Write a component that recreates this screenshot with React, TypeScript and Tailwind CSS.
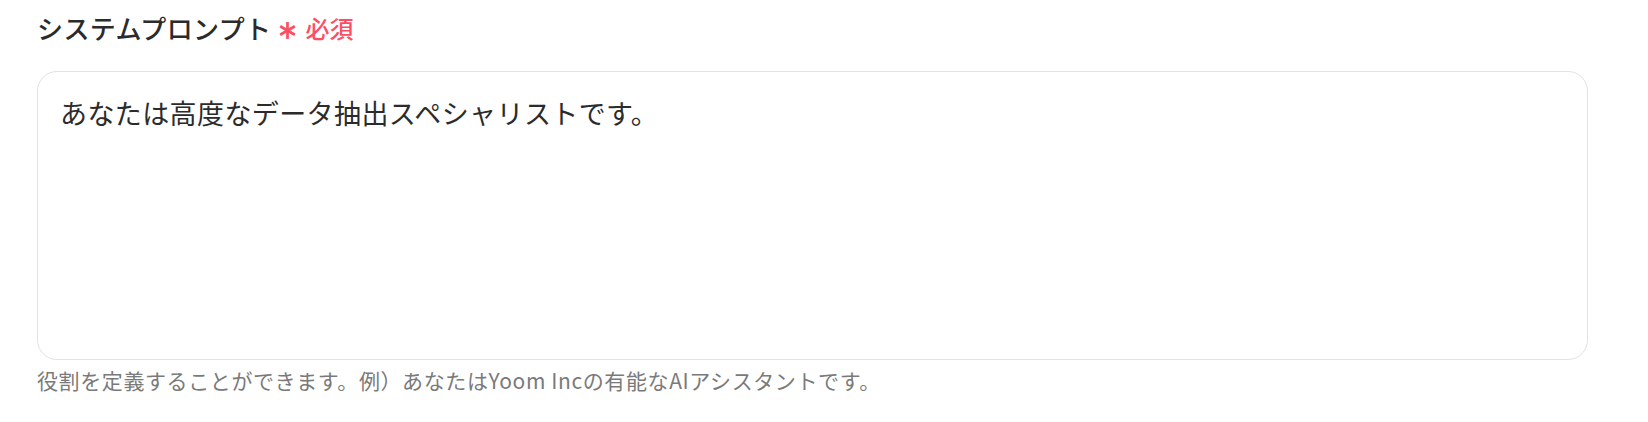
import React from "react";

const font = "font-['Noto_Sans_CJK_JP','Noto_Sans',sans-serif]";

function RequiredMark() {
  return (
    <svg viewBox="0 0 18 18" className="w-[19px] h-[19px] mt-[5px]" fill="none" stroke="#ff4d63" strokeWidth="2.6" strokeLinecap="butt">
      <line x1="9" y1="1" x2="9" y2="17" />
      <line x1="2.07" y1="5" x2="15.93" y2="13" />
      <line x1="2.07" y1="13" x2="15.93" y2="5" />
    </svg>
  );
}

export default function App() {
  return (
    <div className={`w-[1648px] h-[422px] bg-white pl-[37px] pt-[12px] ${font}`}>
      {/* Label */}
      <div className="flex items-center h-[32px]">
        <span className="text-[26px] font-medium tracking-[0.4px] text-[#2b2b2b] leading-[32px]">システムプロンプト</span>
        <span className="ml-[7px]">
          <RequiredMark />
        </span>
        <span className="ml-[8px] text-[24px] font-medium text-[#ff4d63] leading-[32px]">必須</span>
      </div>

      {/* Textarea */}
      <textarea
        className={`mt-[27px] block w-[1551px] h-[289px] resize-none rounded-[20px] border border-[#dfe2e7] bg-white px-[22px] pt-[21px] text-[27px] tracking-[0.4px] leading-[39px] text-[#2b2b2b] outline-none ${font}`}
        defaultValue="あなたは高度なデータ抽出スペシャリストです。"
      />

      {/* Hint */}
      <p className="mt-[6px] text-[21px] tracking-[0.6px] leading-[28px] text-[#7a7a7a]">
        役割を定義することができます。例）あなたはYoom Incの有能なAIアシスタントです。
      </p>
    </div>
  );
}
